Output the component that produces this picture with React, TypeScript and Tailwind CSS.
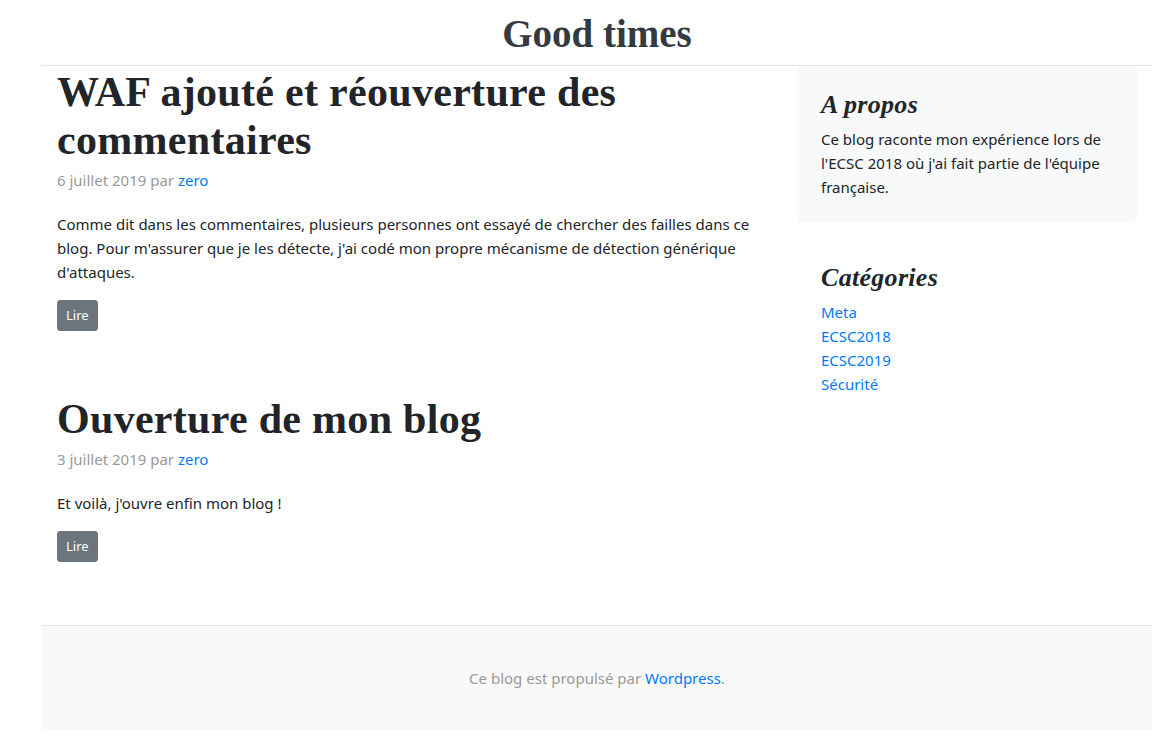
import React from "react";

const serif = "font-['Liberation_Serif','DejaVu_Serif',serif]";
const sans = "font-['Noto_Sans','Open_Sans',sans-serif]";

function Post({
  title,
  date,
  children,
}: {
  title: React.ReactNode;
  date: string;
  children: React.ReactNode;
}) {
  return (
    <div className="mb-[62px]">
      <h2 className={`${serif} text-[42px] leading-[48px] tracking-[0.3px] font-bold text-[#212529] mb-1 pt-[2px] -mb-[-2px]`}>{title}</h2>
      <p className="text-[#999] mb-5 whitespace-nowrap">
        {date} par <a className="text-[#007bff]">zero</a>
      </p>
      <p className="mb-4 text-[#212529] whitespace-nowrap">{children}</p>
      <button className="bg-[#6c757d] text-white text-[13px] leading-[21px] px-2 py-1 border border-[#6c757d] rounded-[3px]">
        Lire
      </button>
    </div>
  );
}

export default function App() {
  return (
    <div className={`${sans} bg-white min-h-[752px] text-[15px] leading-6`}>
      <div className="w-[1110px] ml-[42px]">
        <header className="h-[66px] border-b border-[#e5e5e5] flex items-center justify-center">
          <span className={`${serif} text-[39px] leading-none font-bold text-[#343a40] mt-[2px]`}>Good times</span>
        </header>
        <div className="flex">
          <main className="w-[740px] px-[15px] pb-px">
            <Post title={<>WAF ajouté et réouverture des<br />commentaires</>} date="6 juillet 2019">
              Comme dit dans les commentaires, plusieurs personnes ont essayé de chercher des failles dans ce
              <br />
              blog. Pour m'assurer que je les détecte, j'ai codé mon propre mécanisme de détection générique
              <br />
              d'attaques.
            </Post>
            <Post title="Ouverture de mon blog" date="3 juillet 2019">
              Et voilà, j'ouvre enfin mon blog !
            </Post>
          </main>
          <aside className="w-[370px] px-[15px]">
            <div className="p-6 mb-4 bg-[#f8f9fa] rounded">
              <h4 className={`${serif} italic font-bold text-[26px] leading-[29px] tracking-[0.3px] mb-2 text-[#212529]`}>A propos</h4>
              <p className="text-[#212529] whitespace-nowrap">
                Ce blog raconte mon expérience lors de
                <br />
                l'ECSC 2018 où j'ai fait partie de l'équipe
                <br />
                française.
              </p>
            </div>
            <div className="p-6">
              <h4 className={`${serif} italic font-bold text-[26px] leading-[29px] tracking-[0.3px] mb-2 text-[#212529]`}>Catégories</h4>
              <ol className="text-[#007bff]">
                <li>Meta</li>
                <li>ECSC2018</li>
                <li>ECSC2019</li>
                <li>Sécurité</li>
              </ol>
            </div>
          </aside>
        </div>
        <footer className="border-t border-[#e5e5e5] bg-[#f9f9f9] py-10 text-center text-[#999]">
          <p>
            Ce blog est propulsé par <a className="text-[#007bff]">Wordpress</a>.
          </p>
        </footer>
      </div>
    </div>
  );
}
